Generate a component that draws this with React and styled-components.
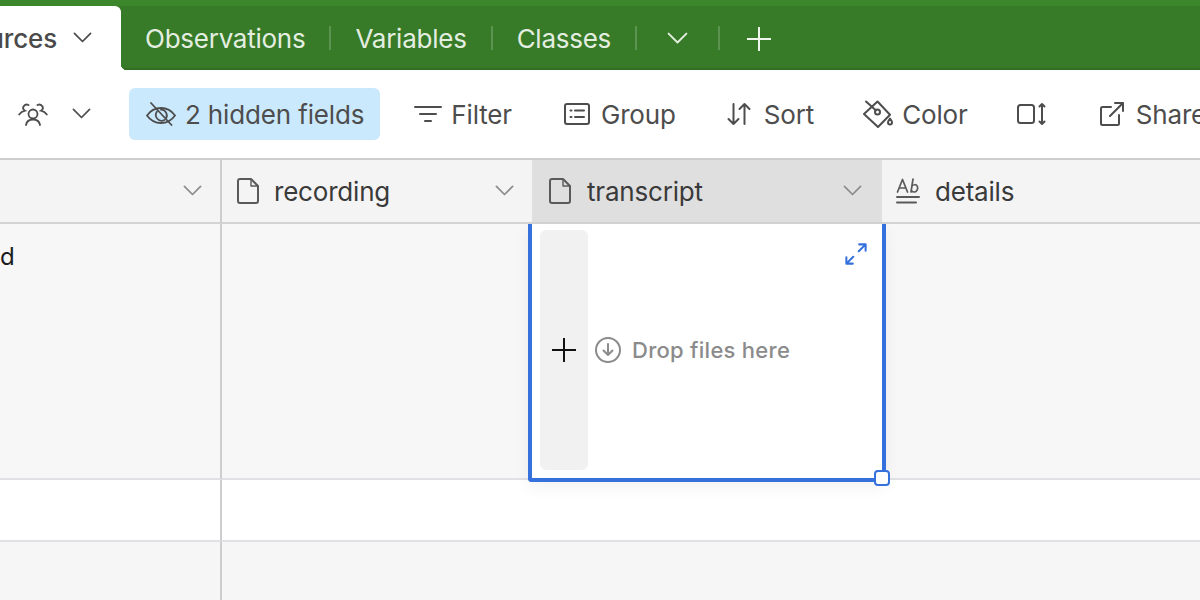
import styled, { createGlobalStyle } from "styled-components";

const GlobalStyle = createGlobalStyle`
  html, body {
    margin: 0;
    padding: 0;
    background: #fff;
    overflow: hidden;
  }
  body {
    font-family: Inter, "Liberation Sans", sans-serif;
  }
`;

const Page = styled.div`
  width: 1200px;
  height: 600px;
  overflow: hidden;
  display: flex;
  flex-direction: column;
`;

const TabBar = styled.div`
  height: 70px;
  box-sizing: border-box;
  padding-top: 6px;
  display: flex;
  flex-shrink: 0;
  background: linear-gradient(#3c862c 0, #3c862c 6px, #377a27 6px, #377a27 67px, #2f6a20 70px);
`;

const ActiveTab = styled.div`
  position: relative;
  width: 121px;
  height: 64px;
  background: #fff;
  border-radius: 0 6px 0 0;
  display: flex;
  align-items: center;
  justify-content: flex-end;
  padding-right: 29px;
  box-sizing: border-box;
  gap: 16px;
  flex-shrink: 0;
  color: #4a4a4a;
  font-size: 26px;
  font-weight: 500;
  letter-spacing: -0.15px;
  white-space: nowrap;

  &::after {
    content: "";
    position: absolute;
    right: -6px;
    bottom: 0;
    width: 6px;
    height: 6px;
    background: radial-gradient(circle at 100% 0, transparent 6px, #fff 6.5px);
  }
`;

const TabLabelClip = styled.div`
  overflow: hidden;
  display: flex;
  justify-content: flex-end;
  width: 57px;
  flex-shrink: 0;
`;

const Tabs = styled.div`
  display: flex;
  align-items: center;
  flex: 1;
  height: 64px;
`;

const Tab = styled.div`
  padding: 1px ${({ $px }) => $px ?? 24}px 0;
  color: #e3eee0;
  font-size: 26px;
  letter-spacing: -0.25px;
  display: flex;
  align-items: center;
  height: 64px;
  box-sizing: border-box;
`;

const TabDivider = styled.div`
  width: 2px;
  height: 24px;
  background: #5c9350;
`;

const Toolbar = styled.div`
  height: 88px;
  flex-shrink: 0;
  box-sizing: border-box;
  display: flex;
  align-items: center;
  justify-content: flex-start;
  color: #4d4d4d;
  font-size: 26px;
  letter-spacing: -0.15px;
  white-space: nowrap;
  overflow: hidden;
`;

const ToolButton = styled.div`
  display: flex;
  align-items: center;
  height: 52px;
  flex-shrink: 0;
  gap: ${({ $gap }) => $gap ?? 9}px;
  margin-left: ${({ $ml }) => $ml ?? 0}px;
  padding: ${({ $active }) => ($active ? "0 16px 0 17px" : "0")};
  border-radius: 6px;
  background: ${({ $active }) => ($active ? "#cbe9fd" : "transparent")};
`;

const Table = styled.div`
  position: relative;
  flex: 1;
  display: grid;
  grid-template-columns: 222px 310px 350px 1fr;
  grid-template-rows: 64px 256px 62px 1fr;
  border-top: 2px solid #cdcdcd;
`;

const HeaderCell = styled.div`
  display: flex;
  align-items: center;
  box-sizing: border-box;
  border-bottom: 2px solid #d3d3d3;
  background: ${({ $selected }) => ($selected ? "#dfdfdf" : "#f4f4f4")};
  border-right: ${({ $divider }) => ($divider ? "2px solid #cdcdcd" : "none")};
  padding-left: ${({ $pl }) => $pl ?? 16}px;
  padding-right: ${({ $selected }) => ($selected ? 20 : 18)}px;
  color: #3a3a3a;
  font-size: 26px;
  letter-spacing: -0.2px;
  gap: ${({ $selected }) => ($selected ? 16 : 15)}px;
`;

const HeaderLabel = styled.span`
  flex: 1;
`;

const BodyCell = styled.div`
  box-sizing: border-box;
  background: ${({ $bg }) => $bg};
  border-bottom: ${({ $last }) => ($last ? "none" : "2px solid #dfe1e4")};
  border-right: ${({ $divider }) => ($divider ? "2px solid #cdcdcd" : "none")};
  grid-column: ${({ $span }) => $span ?? "auto"};
  color: #1c1c1c;
  font-size: 24px;
  line-height: 32px;
  padding-top: 17px;
`;

const SelectedCell = styled.div`
  position: absolute;
  left: 528px;
  top: 64px;
  width: 358px;
  height: 258px;
  box-sizing: border-box;
  background: #fff;
  border: 4px solid #3571dc;
  border-top: none;
  border-radius: 0 0 0 4px;
  box-shadow: 0 6px 16px rgba(0, 0, 0, 0.05);
  display: flex;
  align-items: stretch;
  padding: 6px 0 8px 8px;
`;

const AddColumn = styled.div`
  width: 48px;
  background: #f1f1f1;
  border-radius: 6px;
  display: flex;
  align-items: center;
  justify-content: center;
  flex-shrink: 0;
`;

const DropZone = styled.div`
  display: flex;
  align-items: center;
  gap: 11px;
  padding-left: 7px;
  color: #8b8b8b;
  font-size: 22px;
  font-weight: 500;
  letter-spacing: 0.27px;
`;

const ExpandButton = styled.div`
  position: absolute;
  top: 19px;
  right: 15px;
  display: flex;
`;

const Handle = styled.div`
  position: absolute;
  right: -8px;
  bottom: -8px;
  width: 16px;
  height: 16px;
  box-sizing: border-box;
  background: #fff;
  border: 2px solid #3571dc;
  border-radius: 4px;
`;

const Chevron = ({ size = 19, color = "currentColor" }) => (
  <svg width={size} height={size * 0.6} viewBox="0 0 20 12" fill="none" stroke={color} strokeWidth="1.8" strokeLinecap="round" strokeLinejoin="round" style={{ flexShrink: 0 }}>
    <path d="M1.500 1.500 10 10l8.500-8.500" />
  </svg>
);

const Plus = ({ size = 24, color = "currentColor" }) => (
  <svg width={size} height={size} viewBox="0 0 24 24" fill="none" stroke={color} strokeWidth="2" strokeLinecap="round">
    <path d="M12 0.500v23M0.500 12h23" />
  </svg>
);

const FileIcon = () => (
  <svg width="22" height="26" viewBox="0 0 22 26" fill="none" stroke="#5a5a5a" strokeWidth="2" strokeLinejoin="round" style={{ flexShrink: 0 }}>
    <path d="M3 1h11l7 7v15a2 2 0 0 1-2 2H3a2 2 0 0 1-2-2V3a2 2 0 0 1 2-2Z" />
    <path d="M14 1v7h7" strokeWidth="1.4" />
  </svg>
);

const PeopleIcon = () => (
  <svg width="30" height="24" viewBox="0 0 30 24" fill="none" stroke="#4d4d4d" strokeWidth="1.8" strokeLinecap="round">
    <circle cx="15" cy="12" r="4.500" />
    <path d="M8 23c.6-3.600 3.200-5.500 7-5.500s6.400 1.900 7 5.500" />
    <path d="M10.500 3a3.800 3.800 0 0 0-5 1.500c-.8 1.700 0 3.400 1.500 4.200-2.500.6-4.500 2-5.800 3.800" />
    <path d="M19.500 3a3.800 3.800 0 0 1 5 1.500c.8 1.700 0 3.400-1.500 4.200 2.500.6 4.500 2 5.800 3.800" />
  </svg>
);

const EyeOffIcon = () => (
  <svg width="30" height="24" viewBox="0 0 30 24" fill="none" stroke="#4d4d4d" strokeWidth="1.8" strokeLinecap="round">
    <path d="M1 13.500C4.500 8.500 9.500 6 15 6s10.500 2.500 14 7.500C25.500 18.500 20.500 21 15 21S4.500 18.500 1 13.500Z" />
    <path d="M11 9.500a5.800 5.800 0 0 0 7.500 8.500M20 16.500a5.800 5.800 0 0 0-5-8.800" />
    <path d="M5 1l20.500 22" />
  </svg>
);

const FilterIcon = () => (
  <svg width="28" height="18" viewBox="0 0 28 18" fill="none" stroke="#4d4d4d" strokeWidth="2" strokeLinecap="round">
    <path d="M1 2h26M6 9h16M11 16h6" />
  </svg>
);

const GroupIcon = () => (
  <svg width="26" height="22" viewBox="0 0 26 22" fill="none" stroke="#4d4d4d" strokeWidth="2" strokeLinecap="round">
    <rect x="1" y="1" width="24" height="20" rx="2" />
    <path d="M6.500 7.500h1M11 7.500h9M6.500 14h1M11 14h9" />
  </svg>
);

const SortIcon = () => (
  <svg width="24" height="24" viewBox="0 0 24 24" fill="none" stroke="#4d4d4d" strokeWidth="2" strokeLinecap="round" strokeLinejoin="round">
    <path d="M6.500 2v20M1.500 17l5 5 5-5" />
    <path d="M17.500 22V2M12.500 7l5-5 5 5" />
  </svg>
);

const ColorIcon = () => (
  <svg width="30" height="28" viewBox="0 0 30 28" fill="none" stroke="#4d4d4d" strokeWidth="2" strokeLinecap="round" strokeLinejoin="round">
    <path d="M14.500 1.500 27 14.800 15 27 1 14Z" />
    <circle cx="14.500" cy="12" r="2.500" />
    <path d="M3 1.500 12.800 10.300" />
    <path d="M27 18.500c1.300 1.700 2 2.800 2 3.900a2 2 0 0 1-4 0c0-1.100.7-2.200 2-3.900Z" />
  </svg>
);

const RowHeightIcon = () => (
  <svg width="29" height="24" viewBox="0 0 29 24" fill="none" stroke="#4d4d4d" strokeWidth="2" strokeLinecap="round" strokeLinejoin="round">
    <rect x="1" y="3" width="16" height="18" rx="2.500" />
    <path d="M25 2v20M22.500 4.500 25 2l2.500 2.500M22.500 19.500 25 22l2.500-2.500" />
  </svg>
);

const ShareIcon = () => (
  <svg width="24" height="24" viewBox="0 0 24 24" fill="none" stroke="#4d4d4d" strokeWidth="2" strokeLinecap="round" strokeLinejoin="round">
    <path d="M11 5H2.500A1.500 1.500 0 0 0 1 6.500v15A1.500 1.500 0 0 0 2.500 23h15a1.500 1.500 0 0 0 1.500-1.500V13" />
    <path d="M10 14 23 1M15 1h8v8" />
  </svg>
);

const TextFieldIcon = () => (
  <svg width="24" height="26" viewBox="0 0 24 26" fill="none" stroke="#5a5a5a" strokeWidth="1.700" strokeLinecap="round" strokeLinejoin="round" style={{ flexShrink: 0 }}>
    <path d="M1.500 14 6.500 1.500 11.500 14M3.300 10h6.400" />
    <path d="M17 1l-2 13M15.800 8.500c.8-2 4.800-2.800 5.700.2.700 2.700-1.200 5.500-3.600 5.300-1.500-.1-2.300-.9-2.600-1.800" />
    <path d="M1 19h22" strokeWidth="2" />
    <path d="M1 24.500h19" strokeWidth="2" />
  </svg>
);

const DropIcon = () => (
  <svg width="26" height="26" viewBox="0 0 26 26" fill="none" stroke="#8b8b8b" strokeWidth="2" strokeLinecap="round" strokeLinejoin="round" style={{ flexShrink: 0 }}>
    <circle cx="13" cy="13" r="12" />
    <path d="M13 7v11M8.500 13.500 13 18l4.500-4.500" />
  </svg>
);

const ExpandIcon = () => (
  <svg width="22" height="22" viewBox="0 0 24 24" fill="none" stroke="#3571dc" strokeWidth="2.200" strokeLinecap="round" strokeLinejoin="round">
    <path d="M15 9 22.500 1.500M15.500 1.500h7v7" />
    <path d="M9 15 1.500 22.500M1.500 15.500v7h7" />
  </svg>
);

const App = () => (
  <Page>
    <GlobalStyle />
    <TabBar>
      <ActiveTab>
        <TabLabelClip>
          <span>Sources</span>
        </TabLabelClip>
        <Chevron color="#4a4a4a" />
      </ActiveTab>
      <Tabs>
        <Tab>Observations</Tab>
        <TabDivider />
        <Tab>Variables</Tab>
        <TabDivider />
        <Tab>Classes</Tab>
        <TabDivider />
        <Tab $px={30}>
          <Chevron size={21} color="#e3eee0" />
        </Tab>
        <TabDivider />
        <Tab $px={27}>
          <Plus color="#f0f5ee" />
        </Tab>
      </Tabs>
    </TabBar>
    <Toolbar>
      <ToolButton $ml={18} $gap={24}>
        <PeopleIcon />
        <Chevron color="#4d4d4d" />
      </ToolButton>
      <ToolButton $active $ml={38}>
        <EyeOffIcon />
        <span>2 hidden fields</span>
      </ToolButton>
      <ToolButton $ml={34}>
        <FilterIcon />
        <span>Filter</span>
      </ToolButton>
      <ToolButton $ml={52} $gap={11}>
        <GroupIcon />
        <span>Group</span>
      </ToolButton>
      <ToolButton $ml={51} $gap={13}>
        <SortIcon />
        <span>Sort</span>
      </ToolButton>
      <ToolButton $ml={49}>
        <ColorIcon />
        <span>Color</span>
      </ToolButton>
      <ToolButton $ml={49}>
        <RowHeightIcon />
      </ToolButton>
      <ToolButton $ml={54} $gap={12}>
        <ShareIcon />
        <span>Share</span>
      </ToolButton>
    </Toolbar>
    <Table>
      <HeaderCell $divider>
        <HeaderLabel />
        <Chevron color="#8c8c8c" />
      </HeaderCell>
      <HeaderCell $pl={15}>
        <FileIcon />
        <HeaderLabel>recording</HeaderLabel>
        <Chevron color="#8c8c8c" />
      </HeaderCell>
      <HeaderCell $selected $pl={17}>
        <FileIcon />
        <HeaderLabel>transcript</HeaderLabel>
        <Chevron color="#8c8c8c" />
      </HeaderCell>
      <HeaderCell $pl={14}>
        <TextFieldIcon />
        <HeaderLabel>details</HeaderLabel>
      </HeaderCell>

      <BodyCell $bg="#f7f7f7" $divider>d</BodyCell>
      <BodyCell $bg="#f7f7f7" $span="2 / 5" />

      <BodyCell $bg="#fff" $divider />
      <BodyCell $bg="#fff" $span="2 / 5" />

      <BodyCell $bg="#f6f6f6" $divider $last />
      <BodyCell $bg="#f6f6f6" $span="2 / 5" $last />

      <SelectedCell>
        <AddColumn>
          <Plus color="#111" />
        </AddColumn>
        <DropZone>
          <DropIcon />
          <span>Drop files here</span>
        </DropZone>
        <ExpandButton>
          <ExpandIcon />
        </ExpandButton>
        <Handle />
      </SelectedCell>
    </Table>
  </Page>
);

export default App;
